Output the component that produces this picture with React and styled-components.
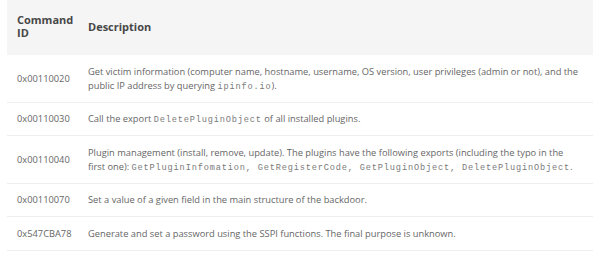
import styled, { createGlobalStyle } from 'styled-components';

const Global = createGlobalStyle`
  body {
    margin: 0;
    background: #fff;
    font-family: "Open Sans", "Liberation Sans", sans-serif;
  }
`;

const commands = [
  {
    id: '0x00110020',
    desc: (
      <>
        Get victim information (computer name, hostname, username, OS version, user privileges (admin or not), and the
        public IP address by querying <Code>ipinfo.io</Code>).
      </>
    ),
  },
  {
    id: '0x00110030',
    desc: (
      <>
        Call the export <Code>DeletePluginObject</Code> of all installed plugins.
      </>
    ),
  },
  {
    id: '0x00110040',
    desc: (
      <>
        Plugin management (install, remove, update). The plugins have the following exports (including the typo in the
        first one): <Code>GetPluginInfomation, GetRegisterCode, GetPluginObject, DeletePluginObject</Code>.
      </>
    ),
  },
  { id: '0x00110070', desc: 'Set a value of a given field in the main structure of the backdoor.' },
  { id: '0x547CBA78', desc: 'Generate and set a password using the SSPI functions. The final purpose is unknown.' },
];

function Code({ children }) {
  return <Mono>{children}</Mono>;
}

const App = () => (
  <>
    <Global />
    <Wrap>
      <Table>
        <colgroup>
          <col style={{ width: 71 }} />
          <col />
        </colgroup>
        <thead>
          <tr>
            <Th>Command ID</Th>
            <Th>Description</Th>
          </tr>
        </thead>
        <tbody>
          {commands.map((c) => (
            <Row key={c.id}>
              <Td $first>{c.id}</Td>
              <Td>{c.desc}</Td>
            </Row>
          ))}
        </tbody>
      </Table>
    </Wrap>
  </>
);

export default App;

const Wrap = styled.div`
  padding: 0 7px;
`;

const Table = styled.table`
  width: 586px;
  table-layout: fixed;
  border-collapse: collapse;
  font-size: 9.3px;
  line-height: 14px;
  color: #666;
`;

const Th = styled.th`
  background: #f5f5f5;
  text-align: left;
  vertical-align: middle;
  font-weight: 700;
  font-size: 11px;
  line-height: 13px;
  color: #474747;
  height: 55px;
  padding: 0 6px 3px 10px;
  box-sizing: border-box;
`;

const Row = styled.tr`
  border-bottom: 1px solid #eeeeee;
`;

const Td = styled.td`
  padding: 9.5px ${(p) => (p.$first ? '4px' : '14px')} 9px 10px;
  vertical-align: middle;
  white-space: ${(p) => (p.$first ? 'nowrap' : 'normal')};
`;

const Mono = styled.code`
  font-family: "Liberation Mono", monospace;
  font-size: 8.6px;
  line-height: 1;
  letter-spacing: 0.85px;
  color: #7a7a7a;
`;
